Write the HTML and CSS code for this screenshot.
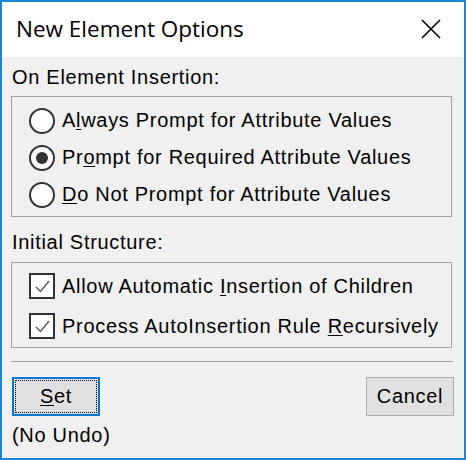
FILE: index.html
```html
<!DOCTYPE html>
<html>
<head>
<meta charset="utf-8">
<link rel="stylesheet" href="styles.css">
</head>
<body>
<div class="window">
  <div class="titlebar">
    <span class="title">New Element Options</span>
    <svg class="close" width="20" height="20" viewBox="0 0 20 20"><path d="M1 1 L19 19 M19 1 L1 19" stroke="#000" stroke-width="1.6" fill="none"/></svg>
  </div>
  <div class="content">
    <div class="label label-first">On Element Insertion:</div>
    <div class="group group-radio">
      <div class="row"><span class="radio"></span><span class="text">A<u>l</u>ways Prompt for Attribute Values</span></div>
      <div class="row"><span class="radio checked"></span><span class="text">Pr<u>o</u>mpt for Required Attribute Values</span></div>
      <div class="row"><span class="radio"></span><span class="text"><u>D</u>o Not Prompt for Attribute Values</span></div>
    </div>
    <div class="label label-second">Initial Structure:</div>
    <div class="group group-check">
      <div class="row row-check"><span class="check"><svg width="21" height="21" viewBox="0 0 21 21"><path d="M4 11 L8.5 15.5 L17 5" stroke="#5a5a5a" stroke-width="1.4" fill="none"/></svg></span><span class="text">Allow Automatic <u>I</u>nsertion of Children</span></div>
      <div class="row row-check"><span class="check"><svg width="21" height="21" viewBox="0 0 21 21"><path d="M4 11 L8.5 15.5 L17 5" stroke="#5a5a5a" stroke-width="1.4" fill="none"/></svg></span><span class="text">Process AutoInsertion Rule <u>R</u>ecursively</span></div>
    </div>
    <div class="separator"></div>
    <div class="buttons">
      <button class="btn btn-default"><u>S</u>et</button>
      <button class="btn">Cancel</button>
    </div>
    <div class="note">(No Undo)</div>
  </div>
</div>
</body>
</html>
```
FILE: styles.css
```css
html, body {
  margin: 0;
  padding: 0;
}
body {
  width: 466px;
  height: 460px;
  overflow: hidden;
}
.window {
  box-sizing: border-box;
  width: 466px;
  height: 460px;
  border: 2px solid #1c85d8;
  background: #f0f0f0;
  display: flex;
  flex-direction: column;
  font-family: "Liberation Sans", Arial, sans-serif;
  color: #000;
}
.titlebar {
  height: 55px;
  background: #fff;
  display: flex;
  align-items: center;
  justify-content: space-between;
  padding-left: 14px;
  flex: none;
}
.title {
  font-family: "Open Sans", "Noto Sans", sans-serif;
  font-size: 22.5px;
  margin-top: -2px;
}
.close {
  margin-right: 23px;
  margin-top: -2px;
}
.content {
  padding: 0 10px 0 9px;
  display: flex;
  flex-direction: column;
}
.label {
  font-size: 20px;
  letter-spacing: 0.7px;
  line-height: 22px;
  padding-left: 1px;
  margin-bottom: 8px;
}
.label-first {
  margin-top: 9px;
}
.label-second {
  margin-top: 14px;
  margin-bottom: 9px;
}
.group {
  border: 1px solid #a0a0a0;
  margin-right: 2px;
}
.group-radio {
  padding: 5px 0 3px;
}
.group-check {
  padding: 3px 0 1px;
}
.row {
  height: 37px;
  display: flex;
  align-items: center;
  padding-left: 17px;
  gap: 7px;
  font-size: 20px;
  letter-spacing: 0.7px;
}
.row-check {
  height: 40px;
}
.text u, .btn u {
  text-decoration-thickness: 1px;
  text-underline-offset: 2px;
}
.radio {
  box-sizing: border-box;
  width: 26px;
  height: 26px;
  border: 2px solid #333;
  border-radius: 50%;
  background: #fff;
  display: flex;
  align-items: center;
  justify-content: center;
  flex: none;
}
.radio.checked::after {
  content: "";
  width: 12px;
  height: 12px;
  border-radius: 50%;
  background: #333;
}
.check {
  box-sizing: border-box;
  width: 26px;
  height: 26px;
  border: 2px solid #333;
  background: #fff;
  display: flex;
  align-items: center;
  justify-content: center;
  flex: none;
}
.check svg {
  display: block;
}
.separator {
  height: 1px;
  background: #a0a0a0;
  margin: 13px 1px 0 0;
}
.buttons {
  display: flex;
  justify-content: space-between;
  margin: 15px 0 0 1px;
}
.btn {
  box-sizing: border-box;
  width: 88px;
  height: 39px;
  background: #e1e1e1;
  border: 1px solid #adadad;
  font-family: "Liberation Sans", Arial, sans-serif;
  font-size: 20px;
  letter-spacing: 0.7px;
  color: #000;
  padding: 0;
  margin: 0;
  position: relative;
}
.btn-default {
  border: 2px solid #0078d7;
}
.btn-default::after {
  content: "";
  position: absolute;
  left: 1px;
  top: 1px;
  right: 1px;
  bottom: 1px;
  border: 1px dotted #000;
}
.note {
  font-size: 20px;
  letter-spacing: 0.7px;
  line-height: 22px;
  margin-top: 8px;
  padding-left: 1px;
}
```
